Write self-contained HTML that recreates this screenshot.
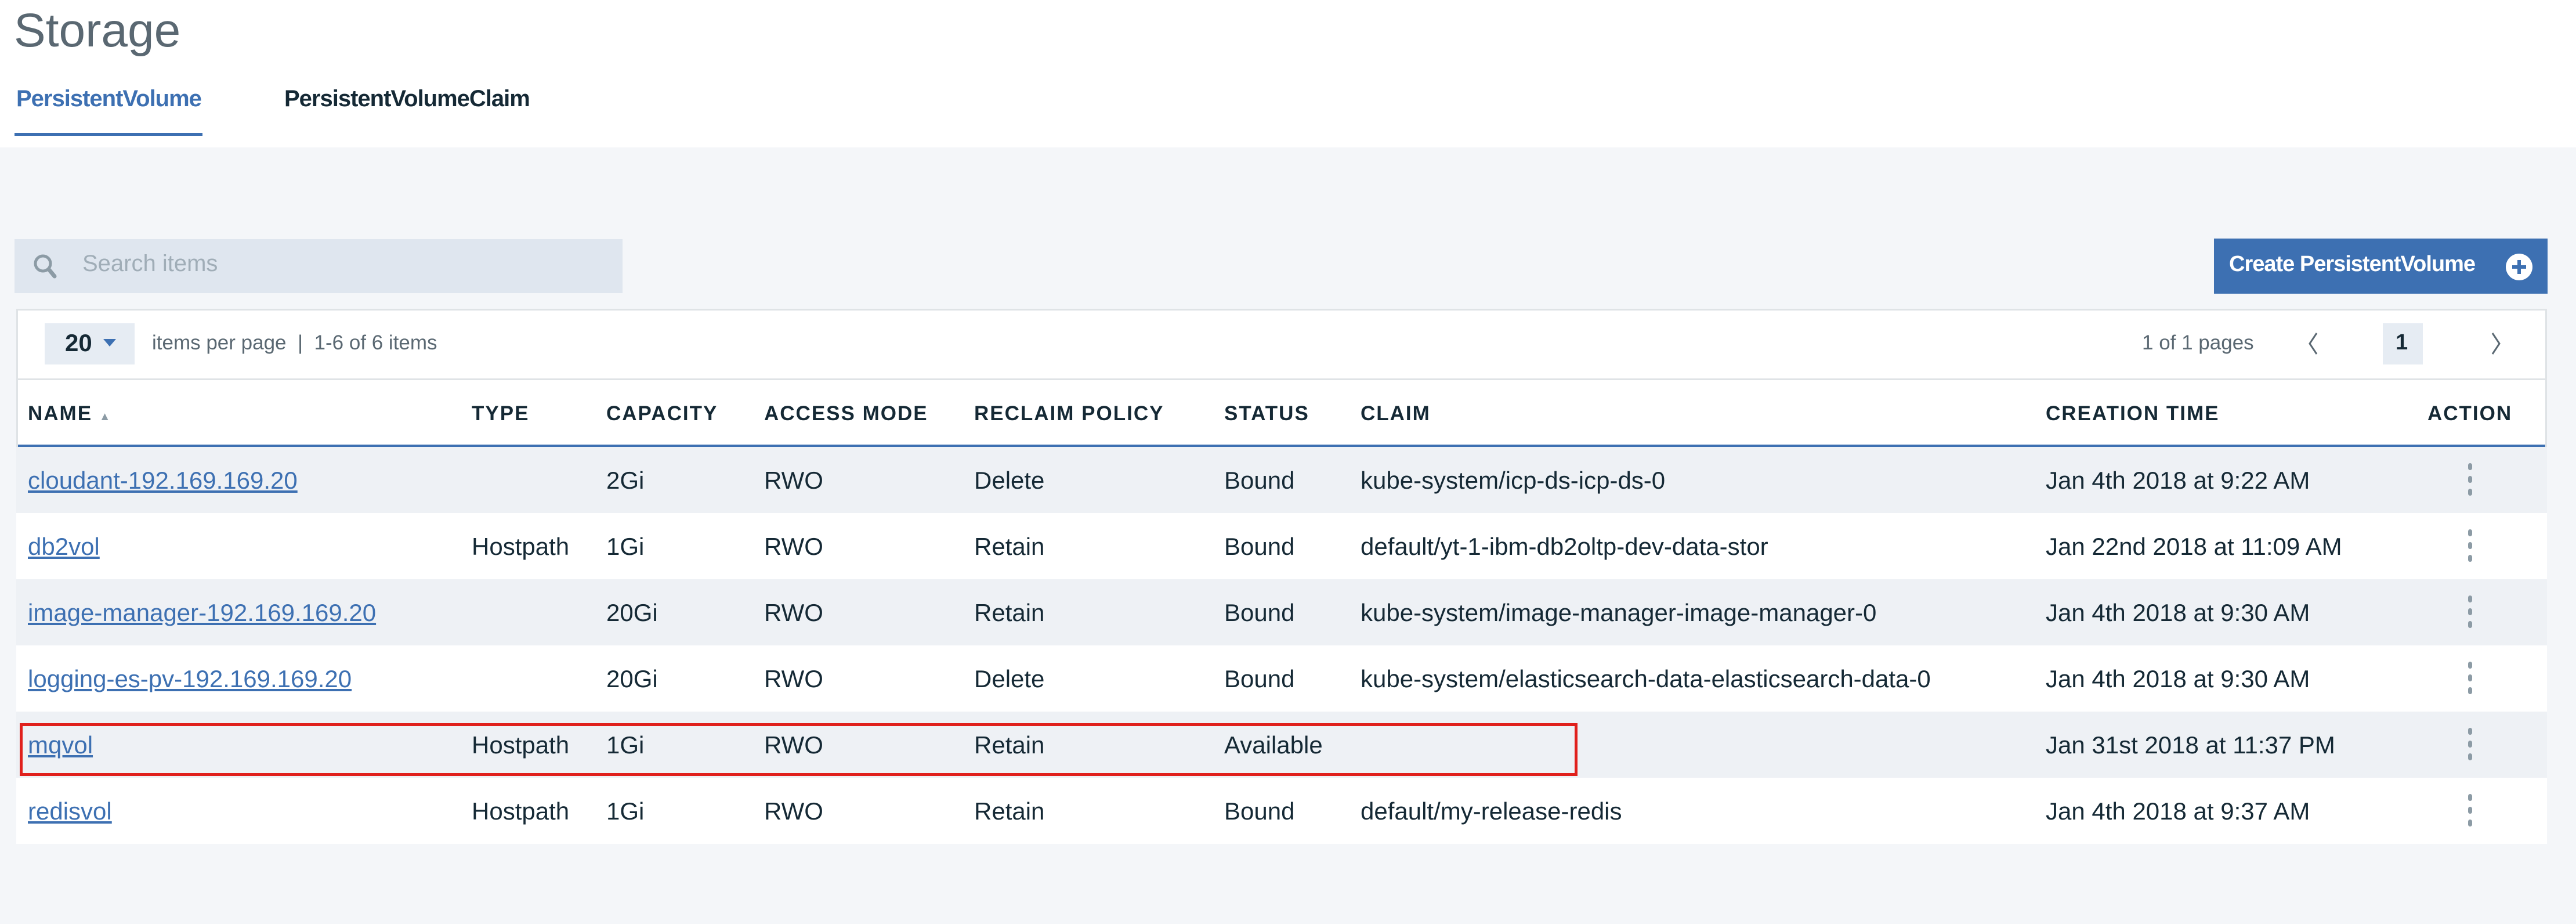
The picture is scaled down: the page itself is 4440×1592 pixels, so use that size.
<!DOCTYPE html>
<html><head><meta charset="utf-8"><style>
*{margin:0;padding:0;box-sizing:border-box}
body{width:4440px;height:1592px;background:#f4f6f9;font-family:"Liberation Sans",sans-serif;color:#152935;position:relative;overflow:hidden}
.a{position:absolute;white-space:nowrap}
.hdr{position:absolute;left:0;top:0;width:4440px;height:254px;background:#fff}
.th{position:absolute;top:693px;font-size:35px;font-weight:bold;letter-spacing:2px;color:#152935}
.row{position:absolute;left:28px;width:4362px;height:114px}
.row span{position:absolute;top:34px;font-size:42px;color:#152935;white-space:nowrap}
.row a{color:#3d70b2;text-decoration:underline}
.dots{position:absolute;left:4226px;top:28px;width:8px}
.dots i{display:block;width:7px;height:12px;border-radius:4px;background:#8c9ba5;margin-bottom:10px}
</style></head><body>
<div class="hdr"></div>
<div class="a" style="left:24px;top:6px;font-size:82px;color:#5a6872">Storage</div>
<div class="a" style="left:28px;top:148px;font-size:40px;font-weight:bold;color:#3d70b2;letter-spacing:-1px">PersistentVolume</div>
<div class="a" style="left:25px;top:229px;width:324px;height:5px;background:#3d70b2"></div>
<div class="a" style="left:490px;top:148px;font-size:40px;font-weight:bold;color:#152935;letter-spacing:-1px">PersistentVolumeClaim</div>

<div class="a" style="left:25px;top:412px;width:1048px;height:93px;background:#dfe6ef"></div>
<svg class="a" style="left:56px;top:436px" width="50" height="46" viewBox="0 0 50 46"><circle cx="18" cy="18" r="13" fill="none" stroke="#8c9ba5" stroke-width="5"/><line x1="28" y1="28" x2="38" y2="40" stroke="#8c9ba5" stroke-width="7" stroke-linecap="round"/></svg>
<div class="a" style="left:142px;top:432px;font-size:40px;color:#a0adb7">Search items</div>

<div class="a" style="left:3816px;top:411px;width:575px;height:95px;background:#3d70b2"></div>
<div class="a" style="left:3842px;top:434px;font-size:38px;font-weight:bold;color:#fff;letter-spacing:-1px">Create PersistentVolume</div>
<svg class="a" style="left:4318px;top:436px" width="48" height="48" viewBox="0 0 48 48"><circle cx="24" cy="24" r="23" fill="#fff"/><path d="M24 12v24M12 24h24" stroke="#3d70b2" stroke-width="6"/></svg>

<div class="a" style="left:28px;top:532px;width:4362px;height:921px;background:#fff;border:3px solid #dfe3e6"></div>
<div class="a" style="left:31px;top:652px;width:4356px;height:3px;background:#dfe3e6"></div>
<div class="a" style="left:77px;top:557px;width:155px;height:71px;background:#e6ecf3"></div>
<div class="a" style="left:112px;top:567px;font-size:42px;font-weight:bold;color:#152935">20</div>
<svg class="a" style="left:178px;top:584px" width="22" height="14"><path d="M0 0h22L11 13z" fill="#3d70b2"/></svg>
<div class="a" style="left:262px;top:571px;font-size:35px;color:#5a6872">items per page&nbsp;&nbsp;|&nbsp;&nbsp;1-6 of 6 items</div>
<div class="a" style="left:3692px;top:571px;font-size:35px;color:#5a6872">1 of 1 pages</div>
<svg class="a" style="left:3975px;top:570px" width="24" height="44"><path d="M18 4L6 22l12 18" fill="none" stroke="#5a6872" stroke-width="3"/></svg>
<div class="a" style="left:4107px;top:557px;width:69px;height:71px;background:#e6ecf3"></div>
<div class="a" style="left:4129px;top:569px;font-size:38px;font-weight:bold">1</div>
<svg class="a" style="left:4290px;top:570px" width="24" height="44"><path d="M6 4l12 18L6 40" fill="none" stroke="#5a6872" stroke-width="3"/></svg>

<div class="th" style="left:48px">NAME <span style="font-size:20px;color:#8c9ba5">▲</span></div>
<div class="th" style="left:813px">TYPE</div>
<div class="th" style="left:1045px">CAPACITY</div>
<div class="th" style="left:1317px">ACCESS MODE</div>
<div class="th" style="left:1679px">RECLAIM POLICY</div>
<div class="th" style="left:2110px">STATUS</div>
<div class="th" style="left:2345px">CLAIM</div>
<div class="th" style="left:3526px">CREATION TIME</div>
<div class="th" style="left:4184px">ACTION</div>
<div class="a" style="left:31px;top:766px;width:4356px;height:4px;background:#3d70b2"></div>

<div class="row" style="top:770px;background:#eef1f5"><span style="left:20px"><a>cloudant-192.169.169.20</a></span><span style="left:1017px">2Gi</span><span style="left:1289px">RWO</span><span style="left:1651px">Delete</span><span style="left:2082px">Bound</span><span style="left:2317px">kube-system/icp-ds-icp-ds-0</span><span style="left:3498px">Jan 4th 2018 at 9:22 AM</span><div class="dots"><i></i><i></i><i></i></div></div>
<div class="row" style="top:884px;background:#fff"><span style="left:20px"><a>db2vol</a></span><span style="left:785px">Hostpath</span><span style="left:1017px">1Gi</span><span style="left:1289px">RWO</span><span style="left:1651px">Retain</span><span style="left:2082px">Bound</span><span style="left:2317px">default/yt-1-ibm-db2oltp-dev-data-stor</span><span style="left:3498px">Jan 22nd 2018 at 11:09 AM</span><div class="dots"><i></i><i></i><i></i></div></div>
<div class="row" style="top:998px;background:#eef1f5"><span style="left:20px"><a>image-manager-192.169.169.20</a></span><span style="left:1017px">20Gi</span><span style="left:1289px">RWO</span><span style="left:1651px">Retain</span><span style="left:2082px">Bound</span><span style="left:2317px">kube-system/image-manager-image-manager-0</span><span style="left:3498px">Jan 4th 2018 at 9:30 AM</span><div class="dots"><i></i><i></i><i></i></div></div>
<div class="row" style="top:1112px;background:#fff"><span style="left:20px"><a>logging-es-pv-192.169.169.20</a></span><span style="left:1017px">20Gi</span><span style="left:1289px">RWO</span><span style="left:1651px">Delete</span><span style="left:2082px">Bound</span><span style="left:2317px">kube-system/elasticsearch-data-elasticsearch-data-0</span><span style="left:3498px">Jan 4th 2018 at 9:30 AM</span><div class="dots"><i></i><i></i><i></i></div></div>
<div class="row" style="top:1226px;background:#eef1f5"><span style="left:20px"><a>mqvol</a></span><span style="left:785px">Hostpath</span><span style="left:1017px">1Gi</span><span style="left:1289px">RWO</span><span style="left:1651px">Retain</span><span style="left:2082px">Available</span><span style="left:3498px">Jan 31st 2018 at 11:37 PM</span><div class="dots"><i></i><i></i><i></i></div></div>
<div class="row" style="top:1340px;background:#fff"><span style="left:20px"><a>redisvol</a></span><span style="left:785px">Hostpath</span><span style="left:1017px">1Gi</span><span style="left:1289px">RWO</span><span style="left:1651px">Retain</span><span style="left:2082px">Bound</span><span style="left:2317px">default/my-release-redis</span><span style="left:3498px">Jan 4th 2018 at 9:37 AM</span><div class="dots"><i></i><i></i><i></i></div></div>

<div class="a" style="left:34px;top:1246px;width:2685px;height:91px;border:5px solid #e0201c"></div>
</body></html>
